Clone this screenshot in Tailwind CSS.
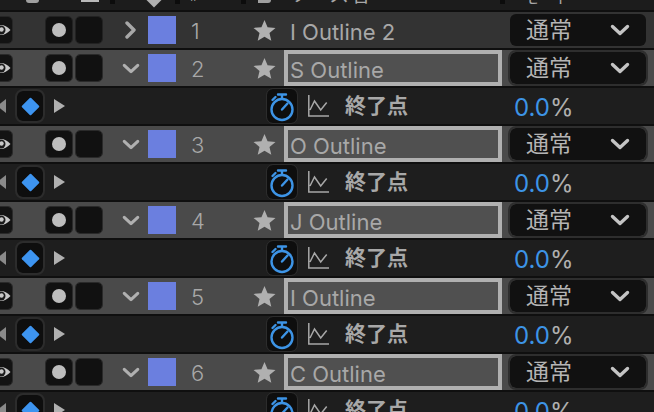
<!DOCTYPE html>
<html><head><script src="https://cdn.jsdelivr.net/npm/@tailwindcss/browser@4"></script></head>
<body class="m-0 bg-[#0f0f0f] overflow-hidden">
<svg width="0" height="0" class="absolute"><defs>
<symbol id="eye" viewBox="0 0 11 14"><path d="M-9 7 Q1 -3 10.500 7 Q1 17 -9 7Z" fill="#c8c8c8"/><circle cx="1" cy="7" r="4.500" fill="#1a1a1a"/><circle cx="1.500" cy="6.500" r="2.200" fill="#c8c8c8"/></symbol>
<symbol id="star" viewBox="0 0 24 24"><path d="M12 1l3.200 7.600 8.300.7-6.300 5.400 1.900 8.100L12 18.500l-7.100 4.300 1.900-8.100L.5 9.300l8.300-.7z" fill="#b0b0b0"/></symbol>
<symbol id="watch" viewBox="0 0 24 30" fill="none" stroke="#3d94e6" stroke-width="2.400"><circle cx="12" cy="17.500" r="10.500"/><path d="M8 2.500h8M12 2.500v4M12 17.500l5.500-6M2.500 8l3-3" stroke-linecap="round"/></symbol>
<symbol id="graph" viewBox="0 0 21 22" fill="none" stroke="#a8a8a8" stroke-width="1.500"><path d="M.8 0v21h20.200M2 15l4.500-9 6.200 9 6-7.500"/></symbol>
<symbol id="down" viewBox="0 0 20 12" fill="none" stroke-width="3.400" stroke-linecap="round" stroke-linejoin="round"><path d="M2.500 2.500l7.500 7 7.500-7"/></symbol>
</defs></svg>
<div class="w-[654px] h-[412px] overflow-hidden flex flex-col font-['Inter','Noto_Sans_CJK_JP',sans-serif]">

<!-- header strip -->
<div class="h-[10px] bg-[#1c1c1c] shrink-0 relative overflow-hidden text-[#a8a8a8]">
<div class="absolute left-[26px] top-0 w-[13px] h-[3px] bg-[#a0a0a0] rounded-b-[3px]"></div>
<div class="absolute left-[81px] top-0 w-[18px] h-[2px] bg-[#b8b8b8]"></div>
<div class="absolute left-[110px] top-0 w-[5px] h-[4px] bg-[#0c0c0c]"></div>
<div class="absolute left-[148px] top-[-7px] w-[12px] h-[12px] rotate-45 bg-[#b0b0b0]"></div>
<div class="absolute left-[175px] top-0 w-[5px] h-[4px] bg-[#0c0c0c]"></div>
<div class="absolute left-[190px] top-[-9px] text-[12px] leading-[12px]">#</div>
<div class="absolute left-[241px] top-0 w-[5px] h-[4px] bg-[#0c0c0c]"></div>
<div class="absolute left-[258px] top-0 w-[13px] h-[3px] bg-[#a0a0a0] rounded-br-[6px]"></div>
<div class="absolute left-[290px] top-[-16px] text-[20px] leading-[20px] font-['Noto_Sans_CJK_JP']">ソース名</div>
<div class="absolute left-[500px] top-0 w-[5px] h-[4px] bg-[#0c0c0c]"></div>
<div class="absolute left-[523px] top-[-12px] text-[16px] leading-[16px] font-['Noto_Sans_CJK_JP']">モード</div>
</div>
<div class="h-[2px] shrink-0"></div>

<!-- row 1 -->
<div class="h-[36px] mb-[2px] shrink-0 bg-[#333333] flex items-center">
 <div class="w-[12px] h-[26px] mr-[34px] bg-[#131313] rounded-r-[4px] outline outline-1 outline-[#262626] overflow-hidden flex items-center shrink-0"><svg class="w-[11px] h-[14px] shrink-0"><use href="#eye"/></svg></div>
 <div class="w-[26px] h-[26px] bg-[#111111] rounded-[4px] flex items-center justify-center shrink-0 outline outline-1 outline-[#222222]"><div class="w-[14px] h-[14px] rounded-full bg-[#bdbdbd]"></div></div>
 <div class="w-[26px] h-[26px] ml-[4px] bg-[#111111] rounded-[4px] shrink-0 outline outline-1 outline-[#222222]"></div>
 <div class="w-[46px] shrink-0 flex pl-[22px]"><svg width="12" height="20" viewBox="0 0 12 20" fill="none" stroke="#a8a8a8" stroke-width="3.400" stroke-linecap="round" stroke-linejoin="round"><path d="M3 3l7 7-7 7"/></svg></div>
 <div class="w-[28px] h-[28px] bg-[#6b7fdf] shrink-0"></div>
 <div class="w-[28px] ml-[15px] pt-[2px] text-[22px] leading-none text-[#a8a8a8] font-light shrink-0">1</div>
 <svg class="w-[23px] h-[23px] ml-[34px] shrink-0"><use href="#star"/></svg>
 <div class="w-[220px] ml-[14px] pt-[3px] text-[22px] text-[#a8a8a8] shrink-0 leading-none">I Outline 2</div>
 <div class="w-[136px] h-[32px] bg-[#111111] rounded-[6px] flex items-center text-[23px] text-[#b4b4b4] pl-[16px] shrink-0 font-['Noto_Sans_CJK_JP'] leading-none"><span class="w-[84px] -mt-[3px]">通常</span><svg class="w-[20px] h-[12px] text-[#c4c4c4] stroke-current"><use href="#down"/></svg></div>
</div>

<!-- group 2 -->
<div class="h-[36px] mb-[2px] shrink-0 bg-[#4a4a4a] flex items-center">
 <div class="w-[12px] h-[26px] mr-[34px] bg-[#131313] rounded-r-[4px] outline outline-1 outline-[#2a2a2a] overflow-hidden flex items-center shrink-0"><svg class="w-[11px] h-[14px] shrink-0"><use href="#eye"/></svg></div>
 <div class="w-[26px] h-[26px] bg-[#111111] rounded-[4px] flex items-center justify-center shrink-0 outline outline-1 outline-[#2a2a2a]"><div class="w-[14px] h-[14px] rounded-full bg-[#bdbdbd]"></div></div>
 <div class="w-[26px] h-[26px] ml-[4px] bg-[#111111] rounded-[4px] shrink-0 outline outline-1 outline-[#2a2a2a]"></div>
 <div class="w-[46px] shrink-0 flex pl-[20px]"><svg class="w-[18px] h-[11px] text-[#b0b0b0] stroke-current"><use href="#down"/></svg></div>
 <div class="w-[28px] h-[28px] bg-[#6b7fdf] shrink-0"></div>
 <div class="w-[28px] ml-[15px] pt-[2px] text-[22px] leading-none text-[#a8a8a8] font-light shrink-0">2</div>
 <svg class="w-[23px] h-[23px] ml-[34px] shrink-0"><use href="#star"/></svg>
 <div class="w-[218px] h-[36px] ml-[8px] border-[4px] border-[#b0b0b0] bg-[#505050] text-[22px] text-[#a8a8a8] pl-[2px] shrink-0 leading-[32px]">S Outline</div>
 <div class="w-[136px] h-[32px] ml-[8px] bg-[#111111] rounded-[6px] outline outline-2 outline-[#2e2e2e] flex items-center text-[23px] text-[#b4b4b4] pl-[16px] shrink-0 font-['Noto_Sans_CJK_JP'] leading-none"><span class="w-[84px] -mt-[3px]">通常</span><svg class="w-[20px] h-[12px] text-[#c4c4c4] stroke-current"><use href="#down"/></svg></div>
</div>
<div class="h-[36px] mb-[2px] shrink-0 bg-[#1e1e1e] flex items-center">
 <div class="w-0 h-0 border-y-[7px] border-y-transparent border-r-[9px] border-r-[#8a8a8a] -ml-[3px] shrink-0"></div>
 <div class="w-[26px] h-[30px] ml-[11px] bg-[#0e0e0e] rounded-[6px] outline outline-2 outline-[#2c2c2c] flex items-center justify-center shrink-0"><div class="w-[13px] h-[13px] rotate-45 bg-[#3d94f0] rounded-[1px]"></div></div>
 <div class="w-0 h-0 ml-[11px] border-y-[7px] border-y-transparent border-l-[11px] border-l-[#b0b0b0] shrink-0"></div>
 <div class="w-[30px] h-[34px] ml-[202px] bg-[#0e0e0e] rounded-[6px] outline outline-1 outline-[#2c2c2c] flex items-center justify-center shrink-0"><svg class="w-[24px] h-[30px] mt-[2px]"><use href="#watch"/></svg></div>
 <svg class="w-[21px] h-[22px] ml-[11px] shrink-0"><use href="#graph"/></svg>
 <div class="w-[169px] ml-[16px] -mt-[3px] text-[21px] font-bold text-[#a8a8a8] font-['Noto_Sans_CJK_JP'] shrink-0 leading-none">終了点</div>
 <div class="text-[24px] text-[#3d94e6] pt-[4px] leading-none">0.0<span class="text-[#b0b0b0]">%</span></div>
</div>

<!-- group 3 -->
<div class="h-[36px] mb-[2px] shrink-0 bg-[#4a4a4a] flex items-center">
 <div class="w-[12px] h-[26px] mr-[34px] bg-[#131313] rounded-r-[4px] outline outline-1 outline-[#2a2a2a] overflow-hidden flex items-center shrink-0"><svg class="w-[11px] h-[14px] shrink-0"><use href="#eye"/></svg></div>
 <div class="w-[26px] h-[26px] bg-[#111111] rounded-[4px] flex items-center justify-center shrink-0 outline outline-1 outline-[#2a2a2a]"><div class="w-[14px] h-[14px] rounded-full bg-[#bdbdbd]"></div></div>
 <div class="w-[26px] h-[26px] ml-[4px] bg-[#111111] rounded-[4px] shrink-0 outline outline-1 outline-[#2a2a2a]"></div>
 <div class="w-[46px] shrink-0 flex pl-[20px]"><svg class="w-[18px] h-[11px] text-[#b0b0b0] stroke-current"><use href="#down"/></svg></div>
 <div class="w-[28px] h-[28px] bg-[#6b7fdf] shrink-0"></div>
 <div class="w-[28px] ml-[15px] pt-[2px] text-[22px] leading-none text-[#a8a8a8] font-light shrink-0">3</div>
 <svg class="w-[23px] h-[23px] ml-[34px] shrink-0"><use href="#star"/></svg>
 <div class="w-[218px] h-[36px] ml-[8px] border-[4px] border-[#b0b0b0] bg-[#505050] text-[22px] text-[#a8a8a8] pl-[2px] shrink-0 leading-[32px]">O Outline</div>
 <div class="w-[136px] h-[32px] ml-[8px] bg-[#111111] rounded-[6px] outline outline-2 outline-[#2e2e2e] flex items-center text-[23px] text-[#b4b4b4] pl-[16px] shrink-0 font-['Noto_Sans_CJK_JP'] leading-none"><span class="w-[84px] -mt-[3px]">通常</span><svg class="w-[20px] h-[12px] text-[#c4c4c4] stroke-current"><use href="#down"/></svg></div>
</div>
<div class="h-[36px] mb-[2px] shrink-0 bg-[#1e1e1e] flex items-center">
 <div class="w-0 h-0 border-y-[7px] border-y-transparent border-r-[9px] border-r-[#8a8a8a] -ml-[3px] shrink-0"></div>
 <div class="w-[26px] h-[30px] ml-[11px] bg-[#0e0e0e] rounded-[6px] outline outline-2 outline-[#2c2c2c] flex items-center justify-center shrink-0"><div class="w-[13px] h-[13px] rotate-45 bg-[#3d94f0] rounded-[1px]"></div></div>
 <div class="w-0 h-0 ml-[11px] border-y-[7px] border-y-transparent border-l-[11px] border-l-[#b0b0b0] shrink-0"></div>
 <div class="w-[30px] h-[34px] ml-[202px] bg-[#0e0e0e] rounded-[6px] outline outline-1 outline-[#2c2c2c] flex items-center justify-center shrink-0"><svg class="w-[24px] h-[30px] mt-[2px]"><use href="#watch"/></svg></div>
 <svg class="w-[21px] h-[22px] ml-[11px] shrink-0"><use href="#graph"/></svg>
 <div class="w-[169px] ml-[16px] -mt-[3px] text-[21px] font-bold text-[#a8a8a8] font-['Noto_Sans_CJK_JP'] shrink-0 leading-none">終了点</div>
 <div class="text-[24px] text-[#3d94e6] pt-[4px] leading-none">0.0<span class="text-[#b0b0b0]">%</span></div>
</div>

<!-- group 4 -->
<div class="h-[36px] mb-[2px] shrink-0 bg-[#4a4a4a] flex items-center">
 <div class="w-[12px] h-[26px] mr-[34px] bg-[#131313] rounded-r-[4px] outline outline-1 outline-[#2a2a2a] overflow-hidden flex items-center shrink-0"><svg class="w-[11px] h-[14px] shrink-0"><use href="#eye"/></svg></div>
 <div class="w-[26px] h-[26px] bg-[#111111] rounded-[4px] flex items-center justify-center shrink-0 outline outline-1 outline-[#2a2a2a]"><div class="w-[14px] h-[14px] rounded-full bg-[#bdbdbd]"></div></div>
 <div class="w-[26px] h-[26px] ml-[4px] bg-[#111111] rounded-[4px] shrink-0 outline outline-1 outline-[#2a2a2a]"></div>
 <div class="w-[46px] shrink-0 flex pl-[20px]"><svg class="w-[18px] h-[11px] text-[#b0b0b0] stroke-current"><use href="#down"/></svg></div>
 <div class="w-[28px] h-[28px] bg-[#6b7fdf] shrink-0"></div>
 <div class="w-[28px] ml-[15px] pt-[2px] text-[22px] leading-none text-[#a8a8a8] font-light shrink-0">4</div>
 <svg class="w-[23px] h-[23px] ml-[34px] shrink-0"><use href="#star"/></svg>
 <div class="w-[218px] h-[36px] ml-[8px] border-[4px] border-[#b0b0b0] bg-[#505050] text-[22px] text-[#a8a8a8] pl-[2px] shrink-0 leading-[32px]">J Outline</div>
 <div class="w-[136px] h-[32px] ml-[8px] bg-[#111111] rounded-[6px] outline outline-2 outline-[#2e2e2e] flex items-center text-[23px] text-[#b4b4b4] pl-[16px] shrink-0 font-['Noto_Sans_CJK_JP'] leading-none"><span class="w-[84px] -mt-[3px]">通常</span><svg class="w-[20px] h-[12px] text-[#c4c4c4] stroke-current"><use href="#down"/></svg></div>
</div>
<div class="h-[36px] mb-[2px] shrink-0 bg-[#1e1e1e] flex items-center">
 <div class="w-0 h-0 border-y-[7px] border-y-transparent border-r-[9px] border-r-[#8a8a8a] -ml-[3px] shrink-0"></div>
 <div class="w-[26px] h-[30px] ml-[11px] bg-[#0e0e0e] rounded-[6px] outline outline-2 outline-[#2c2c2c] flex items-center justify-center shrink-0"><div class="w-[13px] h-[13px] rotate-45 bg-[#3d94f0] rounded-[1px]"></div></div>
 <div class="w-0 h-0 ml-[11px] border-y-[7px] border-y-transparent border-l-[11px] border-l-[#b0b0b0] shrink-0"></div>
 <div class="w-[30px] h-[34px] ml-[202px] bg-[#0e0e0e] rounded-[6px] outline outline-1 outline-[#2c2c2c] flex items-center justify-center shrink-0"><svg class="w-[24px] h-[30px] mt-[2px]"><use href="#watch"/></svg></div>
 <svg class="w-[21px] h-[22px] ml-[11px] shrink-0"><use href="#graph"/></svg>
 <div class="w-[169px] ml-[16px] -mt-[3px] text-[21px] font-bold text-[#a8a8a8] font-['Noto_Sans_CJK_JP'] shrink-0 leading-none">終了点</div>
 <div class="text-[24px] text-[#3d94e6] pt-[4px] leading-none">0.0<span class="text-[#b0b0b0]">%</span></div>
</div>

<!-- group 5 -->
<div class="h-[36px] mb-[2px] shrink-0 bg-[#4a4a4a] flex items-center">
 <div class="w-[12px] h-[26px] mr-[34px] bg-[#131313] rounded-r-[4px] outline outline-1 outline-[#2a2a2a] overflow-hidden flex items-center shrink-0"><svg class="w-[11px] h-[14px] shrink-0"><use href="#eye"/></svg></div>
 <div class="w-[26px] h-[26px] bg-[#111111] rounded-[4px] flex items-center justify-center shrink-0 outline outline-1 outline-[#2a2a2a]"><div class="w-[14px] h-[14px] rounded-full bg-[#bdbdbd]"></div></div>
 <div class="w-[26px] h-[26px] ml-[4px] bg-[#111111] rounded-[4px] shrink-0 outline outline-1 outline-[#2a2a2a]"></div>
 <div class="w-[46px] shrink-0 flex pl-[20px]"><svg class="w-[18px] h-[11px] text-[#b0b0b0] stroke-current"><use href="#down"/></svg></div>
 <div class="w-[28px] h-[28px] bg-[#6b7fdf] shrink-0"></div>
 <div class="w-[28px] ml-[15px] pt-[2px] text-[22px] leading-none text-[#a8a8a8] font-light shrink-0">5</div>
 <svg class="w-[23px] h-[23px] ml-[34px] shrink-0"><use href="#star"/></svg>
 <div class="w-[218px] h-[36px] ml-[8px] border-[4px] border-[#b0b0b0] bg-[#505050] text-[22px] text-[#a8a8a8] pl-[2px] shrink-0 leading-[32px]">I Outline</div>
 <div class="w-[136px] h-[32px] ml-[8px] bg-[#111111] rounded-[6px] outline outline-2 outline-[#2e2e2e] flex items-center text-[23px] text-[#b4b4b4] pl-[16px] shrink-0 font-['Noto_Sans_CJK_JP'] leading-none"><span class="w-[84px] -mt-[3px]">通常</span><svg class="w-[20px] h-[12px] text-[#c4c4c4] stroke-current"><use href="#down"/></svg></div>
</div>
<div class="h-[36px] mb-[2px] shrink-0 bg-[#1e1e1e] flex items-center">
 <div class="w-0 h-0 border-y-[7px] border-y-transparent border-r-[9px] border-r-[#8a8a8a] -ml-[3px] shrink-0"></div>
 <div class="w-[26px] h-[30px] ml-[11px] bg-[#0e0e0e] rounded-[6px] outline outline-2 outline-[#2c2c2c] flex items-center justify-center shrink-0"><div class="w-[13px] h-[13px] rotate-45 bg-[#3d94f0] rounded-[1px]"></div></div>
 <div class="w-0 h-0 ml-[11px] border-y-[7px] border-y-transparent border-l-[11px] border-l-[#b0b0b0] shrink-0"></div>
 <div class="w-[30px] h-[34px] ml-[202px] bg-[#0e0e0e] rounded-[6px] outline outline-1 outline-[#2c2c2c] flex items-center justify-center shrink-0"><svg class="w-[24px] h-[30px] mt-[2px]"><use href="#watch"/></svg></div>
 <svg class="w-[21px] h-[22px] ml-[11px] shrink-0"><use href="#graph"/></svg>
 <div class="w-[169px] ml-[16px] -mt-[3px] text-[21px] font-bold text-[#a8a8a8] font-['Noto_Sans_CJK_JP'] shrink-0 leading-none">終了点</div>
 <div class="text-[24px] text-[#3d94e6] pt-[4px] leading-none">0.0<span class="text-[#b0b0b0]">%</span></div>
</div>

<!-- group 6 -->
<div class="h-[36px] mb-[2px] shrink-0 bg-[#4a4a4a] flex items-center">
 <div class="w-[12px] h-[26px] mr-[34px] bg-[#131313] rounded-r-[4px] outline outline-1 outline-[#2a2a2a] overflow-hidden flex items-center shrink-0"><svg class="w-[11px] h-[14px] shrink-0"><use href="#eye"/></svg></div>
 <div class="w-[26px] h-[26px] bg-[#111111] rounded-[4px] flex items-center justify-center shrink-0 outline outline-1 outline-[#2a2a2a]"><div class="w-[14px] h-[14px] rounded-full bg-[#bdbdbd]"></div></div>
 <div class="w-[26px] h-[26px] ml-[4px] bg-[#111111] rounded-[4px] shrink-0 outline outline-1 outline-[#2a2a2a]"></div>
 <div class="w-[46px] shrink-0 flex pl-[20px]"><svg class="w-[18px] h-[11px] text-[#b0b0b0] stroke-current"><use href="#down"/></svg></div>
 <div class="w-[28px] h-[28px] bg-[#6b7fdf] shrink-0"></div>
 <div class="w-[28px] ml-[15px] pt-[2px] text-[22px] leading-none text-[#a8a8a8] font-light shrink-0">6</div>
 <svg class="w-[23px] h-[23px] ml-[34px] shrink-0"><use href="#star"/></svg>
 <div class="w-[218px] h-[36px] ml-[8px] border-[4px] border-[#b0b0b0] bg-[#505050] text-[22px] text-[#a8a8a8] pl-[2px] shrink-0 leading-[32px]">C Outline</div>
 <div class="w-[136px] h-[32px] ml-[8px] bg-[#111111] rounded-[6px] outline outline-2 outline-[#2e2e2e] flex items-center text-[23px] text-[#b4b4b4] pl-[16px] shrink-0 font-['Noto_Sans_CJK_JP'] leading-none"><span class="w-[84px] -mt-[3px]">通常</span><svg class="w-[20px] h-[12px] text-[#c4c4c4] stroke-current"><use href="#down"/></svg></div>
</div>
<div class="h-[36px] mb-[2px] shrink-0 bg-[#1e1e1e] flex items-center">
 <div class="w-0 h-0 border-y-[7px] border-y-transparent border-r-[9px] border-r-[#8a8a8a] -ml-[3px] shrink-0"></div>
 <div class="w-[26px] h-[30px] ml-[11px] bg-[#0e0e0e] rounded-[6px] outline outline-2 outline-[#2c2c2c] flex items-center justify-center shrink-0"><div class="w-[13px] h-[13px] rotate-45 bg-[#3d94f0] rounded-[1px]"></div></div>
 <div class="w-0 h-0 ml-[11px] border-y-[7px] border-y-transparent border-l-[11px] border-l-[#b0b0b0] shrink-0"></div>
 <div class="w-[30px] h-[34px] ml-[202px] bg-[#0e0e0e] rounded-[6px] outline outline-1 outline-[#2c2c2c] flex items-center justify-center shrink-0"><svg class="w-[24px] h-[30px] mt-[2px]"><use href="#watch"/></svg></div>
 <svg class="w-[21px] h-[22px] ml-[11px] shrink-0"><use href="#graph"/></svg>
 <div class="w-[169px] ml-[16px] -mt-[3px] text-[21px] font-bold text-[#a8a8a8] font-['Noto_Sans_CJK_JP'] shrink-0 leading-none">終了点</div>
 <div class="text-[24px] text-[#3d94e6] pt-[4px] leading-none">0.0<span class="text-[#b0b0b0]">%</span></div>
</div>
</div>
</body></html>
